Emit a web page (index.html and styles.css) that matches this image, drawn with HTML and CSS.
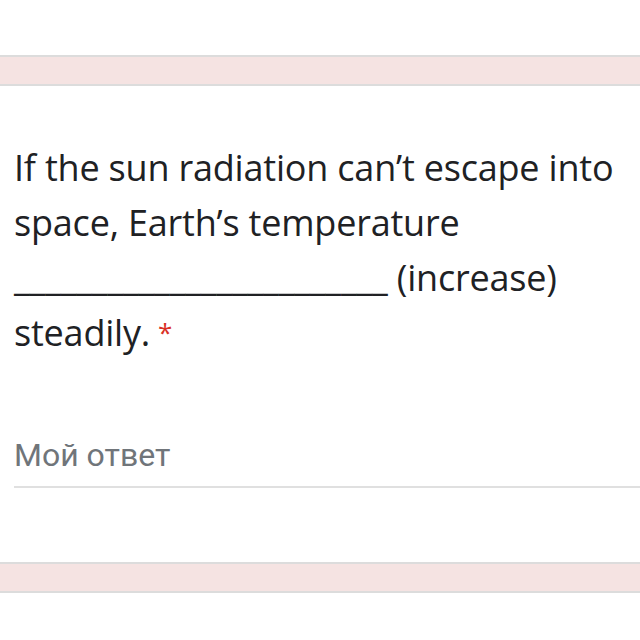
FILE: index.html
```html
<!DOCTYPE html>
<html lang="ru">
<head>
<meta charset="utf-8">
<link rel="stylesheet" href="styles.css">
</head>
<body>
<div class="top-space"></div>
<div class="band"></div>
<section class="card">
  <div class="question">If the sun radiation can’t escape into space, Earth’s temperature ________________________ (increase) steadily.<span class="req">*</span></div>
  <div class="answer">
    <div class="placeholder">Мой ответ</div>
    <div class="underline"></div>
  </div>
</section>
<div class="band"></div>
</body>
</html>
```
FILE: styles.css
```css
html, body {
  margin: 0;
  padding: 0;
  background: #ffffff;
}
body {
  width: 640px;
  height: 640px;
  overflow: hidden;
  font-family: "Open Sans", "Noto Sans", sans-serif;
}
.top-space {
  height: 55px;
}
.band {
  height: 27px;
  background: #f5e3e2;
  border-top: 2px solid #dcdcdc;
  border-bottom: 2px solid #dcdcdc;
}
.card {
  padding: 54px 14px 0 14px;
  height: 476px;
  box-sizing: border-box;
}
.question {
  font-size: 36px;
  line-height: 55px;
  letter-spacing: -0.2px;
  color: #202124;
}
.req {
  display: inline-block;
  margin-left: 8px;
  font-size: 26px;
  line-height: 26px;
  vertical-align: 4px;
  color: #d93025;
}
.answer {
  margin-top: 74px;
  margin-right: -14px;
}
.placeholder {
  font-family: Roboto, "Noto Sans", sans-serif;
  font-size: 32px;
  line-height: 42px;
  color: #70757a;
}
.underline {
  margin-top: 10px;
  height: 2px;
  background: #e0e0e0;
}
```
